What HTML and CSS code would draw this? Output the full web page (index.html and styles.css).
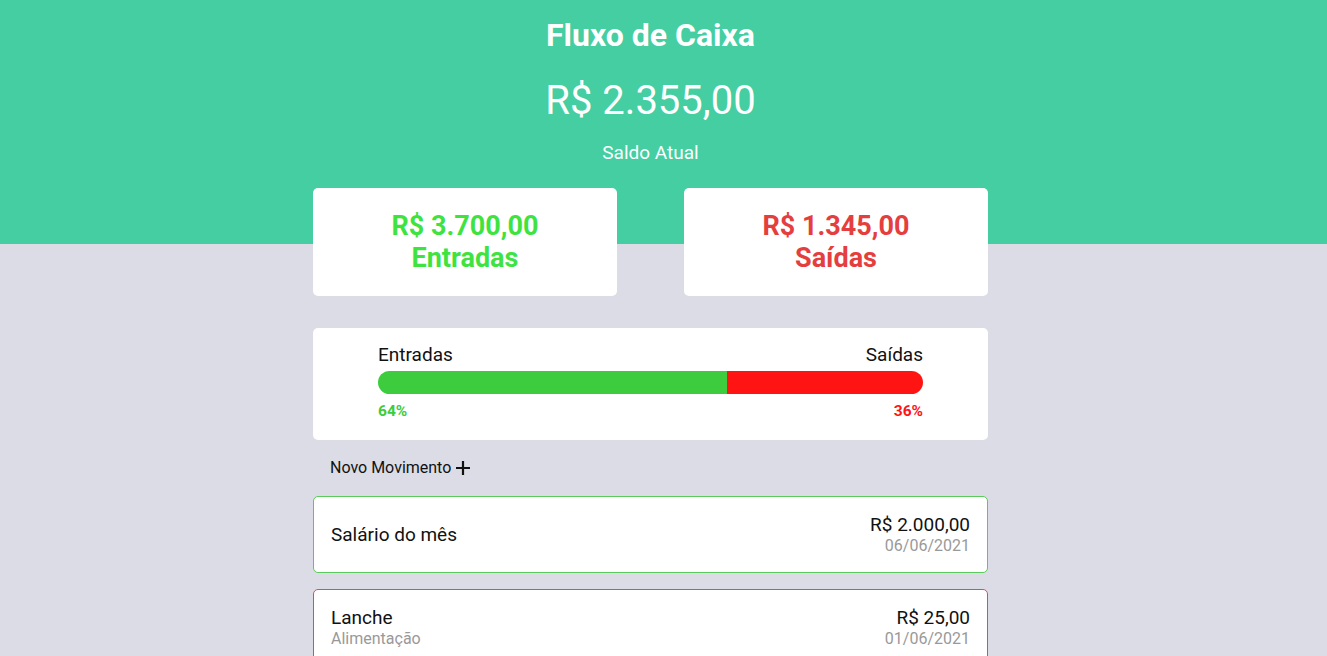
FILE: index.html
```html
<!DOCTYPE html>
<html lang="pt-BR">
<head>
	<meta charset="UTF-8">
	<title>Fluxo de Caixa</title>
<link rel="stylesheet" href="styles.css">
</head>
<body>
<div class="topo">
	<h1>Fluxo de Caixa</h1>
	<div class="saldo">R$ 2.355,00</div>
	<div class="saldo-label">Saldo Atual</div>
</div>
<div class="conteudo">
	<div class="resumo">
		<div class="card-resumo entrada">
			<p>R$ 3.700,00</p>
			<p>Entradas</p>
		</div>
		<div class="card-resumo saida">
			<p>R$ 1.345,00</p>
			<p>Saídas</p>
		</div>
	</div>
	<div class="grafico">
		<div class="grafico-labels">
			<span>Entradas</span>
			<span>Saídas</span>
		</div>
		<div class="barra">
			<div class="barra-entrada" style="width:64%"></div>
			<div class="barra-saida"></div>
		</div>
		<div class="grafico-pct">
			<span class="pct-entrada">64%</span>
			<span class="pct-saida">36%</span>
		</div>
	</div>
	<div class="novo">Novo Movimento
		<svg width="16" height="16" viewBox="0 0 16 16"><path d="M8 1v14M1 8h14" stroke="#111" stroke-width="2.2"/></svg>
	</div>
	<div class="movimento mov-entrada">
		<div class="mov-info">
			<span class="mov-nome">Salário do mês</span>
		</div>
		<div class="mov-valor">
			<span class="valor">R$ 2.000,00</span>
			<span class="data">06/06/2021</span>
		</div>
	</div>
	<div class="movimento mov-saida">
		<div class="mov-info">
			<span class="mov-nome">Lanche</span>
			<span class="categoria">Alimentação</span>
		</div>
		<div class="mov-valor">
			<span class="valor">R$ 25,00</span>
			<span class="data">01/06/2021</span>
		</div>
	</div>
</div>
</body>
</html>
```

FILE: styles.css
```css
*{padding: 0;margin: 0;box-sizing: border-box;}
body{
	font-family: Roboto, "Liberation Sans", sans-serif;background: #dcdce6;color: #111;
	padding-right: 26px;
}
.topo{
	background: #44cea2;height: 244px;text-align: center;color: #fff;padding-top: 15px;
	margin-right: -26px;padding-right: 26px;
}
.topo h1{font-size: 32px;font-weight: 700;line-height: 40px;}
.saldo{font-size: 40px;font-weight: 400;line-height: 50px;margin-top: 21px;}
.saldo-label{font-size: 19px;line-height: 24px;margin-top: 15px;}
.conteudo{
	width: 675px;margin: -56px auto 0;
}
.resumo{display: flex;justify-content: space-between;}
.card-resumo{
	width: 304px;height: 108px;background: #fff;border-radius: 5px;text-align: center;
	font-size: 27px;font-weight: 700;line-height: 32px;padding-top: 22px;
}
.entrada{color: #3fe33f;}
.saida{color: #e53e3e;}
.grafico{
	background: #fff;border-radius: 5px;margin-top: 32px;height: 112px;padding: 16px 65px 0;
}
.grafico-labels{display: flex;justify-content: space-between;font-size: 19px;line-height: 22px;}
.barra{display: flex;height: 23px;border-radius: 12px;overflow: hidden;margin-top: 5px;}
.barra-entrada{background: #3dcc3d;}
.barra-saida{background: #ff1414;flex: 1;}
.grafico-pct{display: flex;justify-content: space-between;font-size: 15.5px;font-weight: 700;line-height: 18px;margin-top: 8px;}
.pct-entrada{color: #3dcc3d;}
.pct-saida{color: #ff1414;}
.novo{
	font-size: 16px;line-height: 20px;margin: 18px 0 0 17px;display: flex;align-items: center;gap: 4px;
}
.movimento{
	background: #fff;border-radius: 5px;display: flex;justify-content: space-between;
	align-items: center;height: 77px;padding: 0 17px;margin-top: 18px;font-size: 19px;
}
.movimento + .movimento{margin-top: 16px;}
.mov-entrada{border: 1px solid #5cc95c;}
.mov-saida{border: 1px solid #e84a4a;}
.mov-info,.mov-valor{display: flex;flex-direction: column;line-height: 21px;}
.mov-valor{text-align: right;}
.data,.categoria{font-size: 16px;color: #999;}
```
